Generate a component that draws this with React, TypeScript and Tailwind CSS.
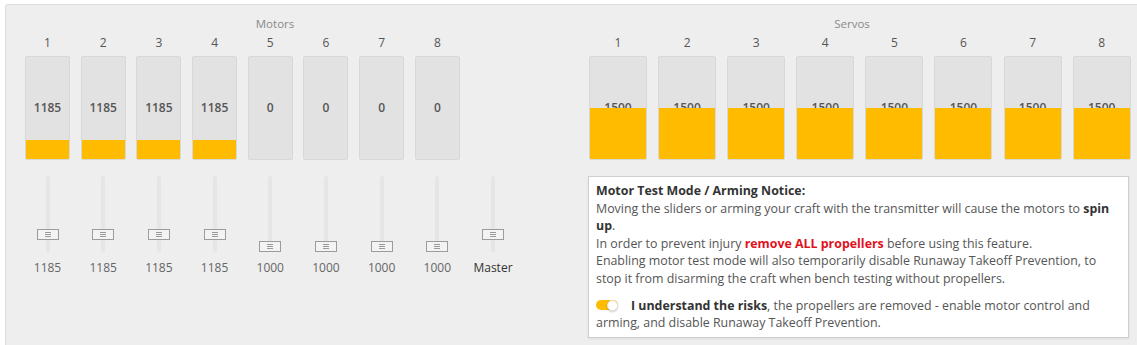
import React from 'react';

const motorValues = [1185, 1185, 1185, 1185, 0, 0, 0, 0];
const sliderValues = [1185, 1185, 1185, 1185, 1000, 1000, 1000, 1000];
const servoValues = [1500, 1500, 1500, 1500, 1500, 1500, 1500, 1500];

// fraction of the 1000..2000 range
function level(v: number) {
  if (v <= 1000) return 0;
  return Math.min(1, (v - 1000) / 1000);
}

function Meter({ value, width }: { value: number; width: string }) {
  return (
    <div
      className={`relative h-[104px] ${width} bg-[#e2e2e2] border border-[#d8d8d8] rounded-[2px] overflow-hidden`}
    >
      <div className="absolute inset-0 flex items-center justify-center pb-[1px] text-[12px] font-semibold text-[#555]">
        {value}
      </div>
      <div
        className="absolute left-0 right-0 bottom-0 bg-[#ffbb00]"
        style={{ height: `${level(value) * 102}px` }}
      />
    </div>
  );
}

function Slider({ value, label, dark }: { value: number; label: string; dark?: boolean }) {
  const top = (1 - level(value)) * 64.5;
  return (
    <div className="flex flex-col items-center w-[45px]">
      <div className="relative h-[76px] w-[22px]">
        <div className="absolute top-0 bottom-0 left-[9px] w-[4px] bg-[#e5e5e5] rounded-full" />
        <div
          className="absolute left-0 w-[22px] h-[11px] border border-[#9c9c9c] bg-[#f3f3f3] flex flex-col items-center justify-center gap-[1px]"
          style={{ top: `${top}px` }}
        >
          <div className="w-[6px] h-[1px] bg-[#9a9a9a]" />
          <div className="w-[6px] h-[1px] bg-[#9a9a9a]" />
          <div className="w-[6px] h-[1px] bg-[#9a9a9a]" />
        </div>
      </div>
      <div className={`mt-[8px] text-[12px] leading-[16px] ${dark ? 'text-[#333]' : 'text-[#666]'}`}>
        {label}
      </div>
    </div>
  );
}

export default function App() {
  return (
    <div
      className="w-[1137px] h-[345px] bg-white pt-[4px] pl-[5px] overflow-hidden"
      style={{ fontFamily: '"Open Sans", "Noto Sans", sans-serif' }}
    >
      <div className="min-h-[345px] w-[1200px] bg-[#eeeeee] border border-b-0 border-[#dcdcdc] rounded-tl-[3px] flex">
        {/* Motors */}
        <div className="w-[538px] flex flex-col pt-[12px]">
          <div className="text-center text-[11.5px] leading-[14px] text-[#8a8a8a]">Motors</div>
          <div className="pl-[19px] flex gap-[10.7px] mt-[4px]">
            {motorValues.map((v, i) => (
              <div key={i} className="w-[45px] flex flex-col items-center">
                <div className="text-[12px] leading-[16px] text-[#555] mb-[5px]">{i + 1}</div>
                <Meter value={v} width="w-[45px]" />
              </div>
            ))}
          </div>
          <div className="pl-[19px] flex gap-[10.7px] mt-[16px]">
            {sliderValues.map((v, i) => (
              <Slider key={i} value={v} label={String(v)} />
            ))}
            <Slider value={1185} label="Master" dark />
          </div>
        </div>

        {/* Servos */}
        <div className="w-[568px] ml-[24px] flex flex-col pt-[12px]">
          <div className="text-center text-[11.5px] leading-[14px] text-[#8a8a8a]">Servos</div>
          <div className="pl-[21px] flex gap-[11.1px] mt-[4px]">
            {servoValues.map((v, i) => (
              <div key={i} className="w-[58px] flex flex-col items-center">
                <div className="text-[12px] leading-[16px] text-[#555] mb-[5px]">{i + 1}</div>
                <Meter value={v} width="w-[58px]" />
              </div>
            ))}
          </div>

          <div className="ml-[20px] mt-[16px] w-[541px] h-[162px] bg-white border border-[#cfcfcf] shadow-[0_1px_2px_rgba(0,0,0,0.08)] px-[7px] pt-[5px] text-[12.4px] leading-[17.5px] text-[#555] whitespace-nowrap">
            <div>
              <span className="font-bold text-[#333]">Motor Test Mode / Arming Notice:</span>
              <br />
              Moving the sliders or arming your craft with the transmitter will cause the motors to{' '}
              <span className="font-bold text-[#333]">spin</span>
              <br />
              <span className="font-bold text-[#333]">up</span>.
              <br />
              In order to prevent injury{' '}
              <span className="font-bold text-[#e2121d]">remove ALL propellers</span> before using
              this feature.
              <br />
              Enabling motor test mode will also temporarily disable Runaway Takeoff Prevention, to
              <br />
              stop it from disarming the craft when bench testing without propellers.
            </div>
            <div className="mt-[9.5px]">
              <span className="inline-flex items-center justify-end align-middle w-[22px] h-[10px] rounded-full bg-[#ffbb00] mr-[13px] relative -top-[1px]">
                <span className="w-[11px] h-[11px] rounded-full bg-white border border-[#e6e6e6] shadow-[0_1px_2px_rgba(0,0,0,0.2)]" />
              </span>
              <span className="font-bold text-[#333]">I understand the risks</span>, the propellers
              are removed - enable motor control and
              <br />
              arming, and disable Runaway Takeoff Prevention.
            </div>
          </div>
        </div>
      </div>
    </div>
  );
}
